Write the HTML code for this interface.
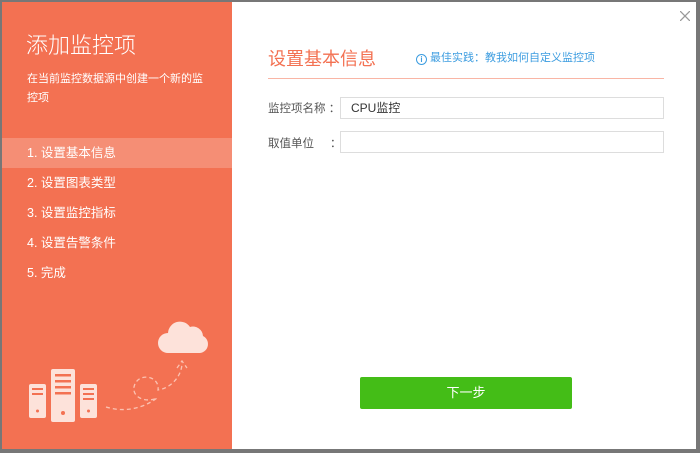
<!DOCTYPE html>
<html><head><meta charset="utf-8"><style>
*{margin:0;padding:0;box-sizing:border-box}
body{width:700px;height:453px;overflow:hidden;background:#777;font-family:"Liberation Sans","Noto Sans CJK SC",sans-serif;position:relative}
.win{position:absolute;left:2px;top:2px;width:694px;height:447px;background:#fff}
.left{position:absolute;left:0;top:0;width:230px;height:447px;background:#f37152;color:#fff}
.t{position:absolute;left:24px;top:26px;font-size:22px;font-weight:300}
.sub{position:absolute;left:25px;top:68px;width:185px;font-size:11px;line-height:19px}
.step{position:absolute;left:0;width:230px;height:30px;line-height:30px;padding-left:25px;font-size:12.5px}
.act{background:#f58e75}
.abs{position:absolute}
.h{left:266px;top:43px;font-size:18px;color:#f37152}
.info{left:414px;top:47px;font-size:11px;color:#3d9de0}
.line{left:266px;top:76px;width:396px;height:1px;background:#f9b5a5}
.lbl{font-size:11.5px;color:#555}
.inp{border:1px solid #ddd;width:324px;height:22px;font-size:12px;color:#333;padding-left:10px;line-height:20px}
.btn{left:358px;top:375px;width:212px;height:32px;background:#44bd17;border-radius:2px;color:#fff;font-size:13px;text-align:center;line-height:32px}
</style></head><body>
<div class="win">
<div class="left">
<div class="t">添加监控项</div>
<div class="sub">在当前监控数据源中创建一个新的监控项</div>
<div class="step act" style="top:136px">1. 设置基本信息</div>
<div class="step" style="top:166px">2. 设置图表类型</div>
<div class="step" style="top:196px">3. 设置监控指标</div>
<div class="step" style="top:226px">4. 设置告警条件</div>
<div class="step" style="top:256px">5. 完成</div>
<svg class="abs" style="left:0;top:298px" width="230" height="149" viewBox="0 0 230 149">
<g fill="#fde2da">
<rect x="27" y="84" width="17" height="34" rx="2"/>
<rect x="49" y="69" width="24" height="53" rx="2"/>
<rect x="78" y="84" width="17" height="34" rx="2"/>
<path d="M166 53 a10 10 0 0 1 0-20 a12 12 0 0 1 22-6 a10 10 0 0 1 13 9 a9 9 0 0 1 -3 17z"/>
</g>
<g fill="#f37152">
<rect x="30" y="88" width="11" height="2"/><rect x="30" y="93" width="11" height="2"/>
<rect x="53" y="74" width="16" height="2.5"/><rect x="53" y="80" width="16" height="2.5"/><rect x="53" y="86" width="16" height="2.5"/><rect x="53" y="92" width="16" height="2.5"/>
<rect x="81" y="88" width="11" height="2"/><rect x="81" y="93" width="11" height="2"/><rect x="81" y="98" width="11" height="2"/>
<circle cx="35.5" cy="111" r="1.5"/><circle cx="61" cy="113" r="2"/><circle cx="86.5" cy="111" r="1.5"/>
</g>
<g fill="none" stroke="#fbc2b2" stroke-width="1.3" stroke-dasharray="4 3">
<path d="M104 107 C130 115 150 102 155 98 C145 103 130 98 132 87 C135 72 158 75 156 90 C170 88 180 75 180 63"/>
<path d="M175 68 L180 61 L185 68"/>
</g>
</svg>
</div>
<svg class="abs" style="left:678px;top:9px" width="10" height="10"><path d="M0 0L10 10M10 0L0 10" stroke="#999" stroke-width="1.3"/></svg>
<div class="abs h">设置基本信息</div>
<div class="abs info"><span style="display:inline-block;width:11px;height:11px;border:1px solid #3d9de0;border-radius:50%;font-size:8px;text-align:center;line-height:9px;vertical-align:-1px;font-weight:bold">i</span> 最佳实践：教我如何自定义监控项</div>
<div class="abs line"></div>
<div class="abs lbl" style="left:266px;top:98px">监控项名称 ：</div>
<div class="abs inp" style="left:338px;top:95px">CPU监控</div>
<div class="abs lbl" style="left:266px;top:133px">取值单位&nbsp;&nbsp;&nbsp;&nbsp;&nbsp;：</div>
<div class="abs inp" style="left:338px;top:129px"></div>
<div class="abs btn">下一步</div>
</div>
</body></html>
